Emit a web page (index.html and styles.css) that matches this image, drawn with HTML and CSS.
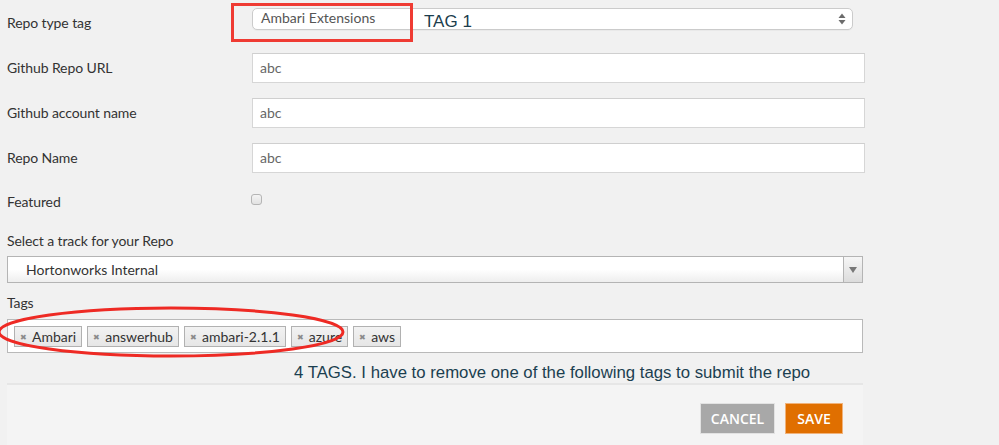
FILE: index.html
```html
<!DOCTYPE html>
<html>
<head>
<meta charset="utf-8">
<link rel="stylesheet" href="styles.css">
</head>
<body>
<div class="page">
  <form class="form">
    <div class="row row-first">
      <label class="label">Repo type tag</label>
      <div class="mac-select">
        <span class="mac-value">Ambari Extensions</span>
        <svg class="mac-arrows" width="8" height="12" viewBox="0 0 8 12"><path d="M4 0.5 L7.5 5 L0.5 5 Z" fill="#6b6b6b"/><path d="M4 11.5 L7.5 7 L0.5 7 Z" fill="#6b6b6b"/></svg>
      </div>
      <div class="note-box"></div>
      <span class="note-tag">TAG 1</span>
    </div>
    <div class="row">
      <label class="label">Github Repo URL</label>
      <div class="input">abc</div>
    </div>
    <div class="row">
      <label class="label">Github account name</label>
      <div class="input">abc</div>
    </div>
    <div class="row">
      <label class="label">Repo Name</label>
      <div class="input">abc</div>
    </div>
    <div class="row row-check">
      <label class="label">Featured</label>
      <span class="checkbox"></span>
    </div>
    <div class="stack">
      <label class="label label-block">Select a track for your Repo</label>
      <div class="chosen">
        <span class="chosen-value">Hortonworks Internal</span>
        <span class="chosen-arrow"><svg width="8" height="6" viewBox="0 0 8 6"><path d="M0 0 L8 0 L4 6 Z" fill="#777"/></svg></span>
      </div>
    </div>
    <div class="stack stack-tags">
      <label class="label label-block">Tags</label>
      <div class="tags">
        <span class="tag"><span class="tag-x">✖</span>Ambari</span>
        <span class="tag"><span class="tag-x">✖</span>answerhub</span>
        <span class="tag"><span class="tag-x">✖</span>ambari-2.1.1</span>
        <span class="tag"><span class="tag-x">✖</span>azure</span>
        <span class="tag"><span class="tag-x">✖</span>aws</span>
      </div>
      <svg class="note-ellipse" width="360" height="60" viewBox="0 0 360 60"><ellipse cx="173" cy="30" rx="172" ry="24" fill="none" stroke="#ee2a24" stroke-width="3"/></svg>
    </div>
    <p class="message">4 TAGS. I have to remove one of the following tags to submit the repo</p>
    <div class="footer">
      <button type="button" class="btn btn-cancel">CANCEL</button>
      <button type="button" class="btn btn-save">SAVE</button>
    </div>
  </form>
</div>
</body>
</html>
```

FILE: styles.css
```css
html, body {
  margin: 0;
  padding: 0;
  background: #f1f1f1;
}
.page {
  width: 999px;
  height: 445px;
  overflow: hidden;
  position: relative;
}
.form {
  margin: 0;
  padding: 0 0 0 7px;
  width: 858px;
  font-family: Lato, "Open Sans", sans-serif;
  font-size: 14px;
  color: #333;
  position: relative;
}
.row {
  display: flex;
  align-items: center;
  height: 45px;
  position: relative;
}
.label {
  width: 245px;
  flex: none;
  color: #333;
  font-size: 14px;
  letter-spacing: -0.1px;
}
.row-first {
  align-items: flex-start;
}
.row-first .label {
  padding-top: 14px;
}
.mac-select {
  margin-top: 8px;
  width: 601px;
  height: 22px;
  box-sizing: border-box;
  border: 1px solid #cbcbcb;
  border-radius: 5px;
  background: #fff;
  display: flex;
  align-items: center;
  justify-content: space-between;
  padding: 0 6px 0 8px;
  box-shadow: 0 1px 0 rgba(0,0,0,0.03);
}
.mac-value {
  color: #555;
  font-size: 14px;
  margin-top: -3px;
}
.mac-arrows {
  display: block;
}
.note-box {
  position: absolute;
  left: 224px;
  top: 3px;
  width: 182px;
  height: 39px;
  box-sizing: border-box;
  border: 3px solid #ef3b33;
}
.note-tag {
  position: absolute;
  left: 417px;
  top: 12px;
  font-family: "Liberation Sans", Arial, sans-serif;
  font-size: 17px;
  color: #1b3d4d;
}
.input {
  width: 613px;
  height: 30px;
  box-sizing: border-box;
  background: #fff;
  border: 1px solid #d6d6d6;
  border-top-color: #cfcfcf;
  padding: 0 7px;
  display: flex;
  align-items: center;
  color: #666;
  font-size: 14px;
}
.checkbox {
  width: 11px;
  height: 11px;
  box-sizing: border-box;
  border: 1px solid #b5b5b5;
  border-radius: 3px;
  background: linear-gradient(#f4f4f4, #e2e2e2);
  margin-left: -1px;
  margin-top: -6px;
}
.row-check .label {
  margin-top: -2px;
}
.stack {
  display: flex;
  flex-direction: column;
  position: relative;
}
.label-block {
  width: auto;
  height: 20px;
  line-height: 20px;
}
.stack .label-block {
  margin-top: 6px;
  margin-bottom: 5px;
}
.chosen {
  width: 856px;
  height: 27px;
  box-sizing: border-box;
  border: 1px solid #b4b4b4;
  background: linear-gradient(#ffffff 0%, #ffffff 50%, #eeeeee 100%);
  display: flex;
  align-items: center;
  justify-content: space-between;
}
.chosen-value {
  padding-left: 18px;
  color: #333;
}
.chosen-arrow {
  width: 19px;
  height: 100%;
  box-sizing: border-box;
  border-left: 1px solid #b4b4b4;
  background: linear-gradient(#f6f6f6, #dcdcdc);
  display: flex;
  align-items: center;
  justify-content: center;
}
.stack-tags .label-block {
  margin-top: 10px;
  margin-bottom: 6px;
}
.tags {
  width: 856px;
  height: 34px;
  box-sizing: border-box;
  background: #fff;
  border: 1px solid #b9b9b9;
  display: flex;
  align-items: center;
  gap: 5px;
  padding: 0 6px;
}
.tag {
  height: 21px;
  box-sizing: border-box;
  border: 1px solid #b1b1b1;
  background: linear-gradient(#f2f2f2, #e6e6e6);
  display: flex;
  align-items: center;
  padding: 0 5px 0 5px;
  color: #333;
  font-size: 14px;
}
.tag-x {
  color: #8a8a8a;
  font-size: 8px;
  margin-right: 5px;
  margin-top: 1px;
}
.note-ellipse {
  position: absolute;
  left: -9px;
  top: 19px;
}
.message {
  margin: 0;
  height: 20px;
  line-height: 20px;
  padding: 10px 0 0 287px;
  font-family: "Liberation Sans", Arial, sans-serif;
  font-size: 16.75px;
  color: #1b3f50;
}
.footer {
  width: 856px;
  height: 62px;
  box-sizing: border-box;
  border-top: 2px solid #e6e6e6;
  background: #f4f4f4;
  display: flex;
  justify-content: flex-end;
  align-items: flex-start;
  gap: 10px;
  padding: 18px 20px 0 0;
}
.btn {
  height: 31px;
  box-sizing: border-box;
  border: 1px solid #e2e2e2;
  color: #fff;
  font-family: "Open Sans", Lato, sans-serif;
  font-weight: 600;
  font-size: 14px;
  padding: 0;
  cursor: pointer;
}
.btn-cancel {
  width: 75px;
  background: #a8a8a8;
}
.btn-save {
  width: 58px;
  background: #e06f00;
  border-color: #f0b27a;
}
```
